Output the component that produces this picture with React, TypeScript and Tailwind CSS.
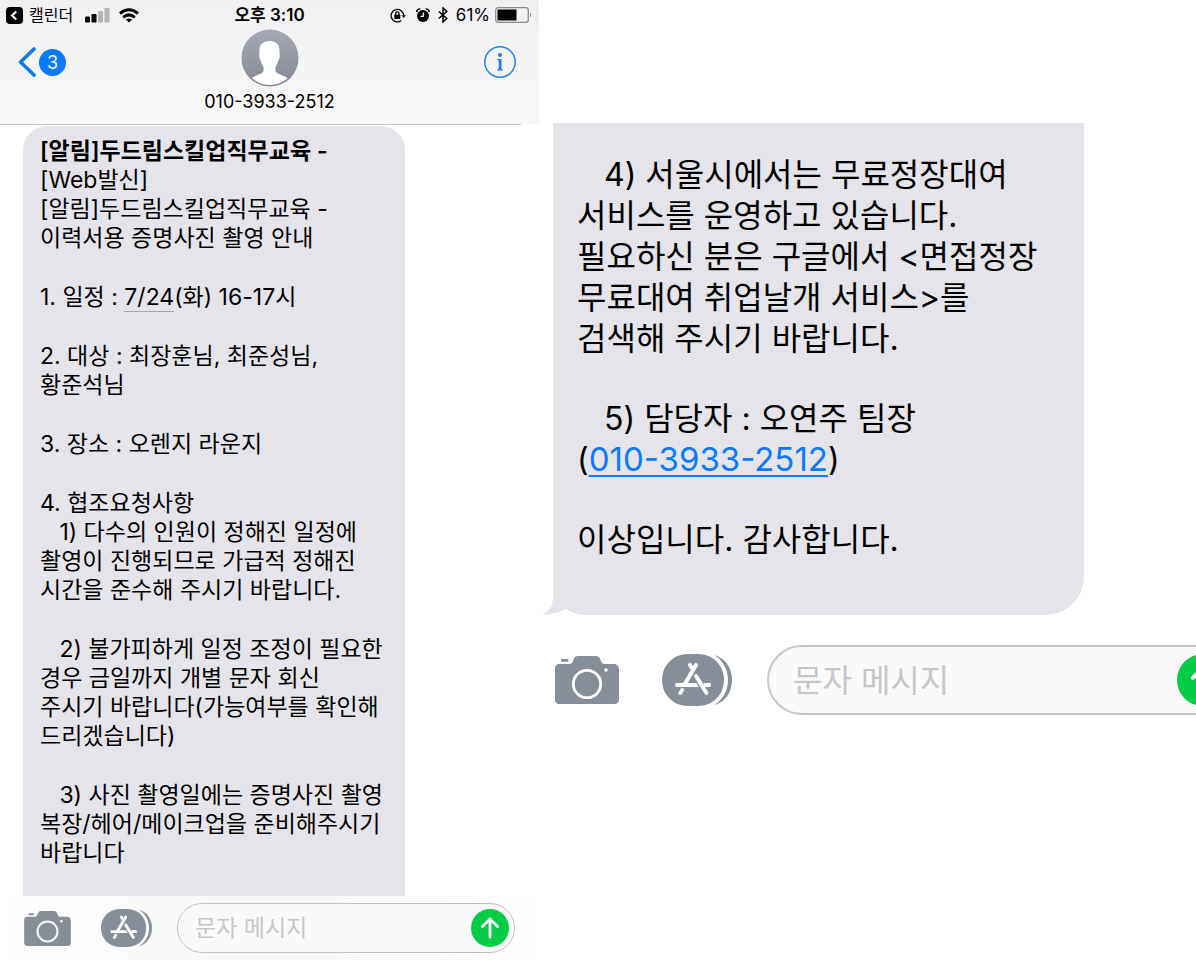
import React from "react";

const FONT = "font-['Inter','Noto_Sans_CJK_KR',sans-serif]";

function CameraIcon({ className, hole }: { className: string; hole: string }) {
  return (
    <svg viewBox="0 0 64 48" className={className} aria-hidden="true">
      <rect x="6" y="3" width="7.4" height="2.8" rx="0.6" fill="#868e99" />
      <path
        d="M5 8H14C16.500 8 17.500 6.500 18.500 4L19 2.800C19.800 1 21 0 23 0H41C43 0 44.200 1 45 2.800L45.500 4C46.500 6.500 47.500 8 50 8H58C62 8 64 10 64 13.500V43C64 46.500 62.500 48 59 48H5C1.500 48 0 46.500 0 43V13C0 9.500 1.500 8 5 8Z"
        fill="#868e99"
      />
      <circle cx="32" cy="28" r="13.7" fill="none" stroke={hole} strokeWidth="2.8" />
      <circle cx="51" cy="14" r="1.8" fill={hole} />
    </svg>
  );
}

function AppStoreIcon({ className }: { className: string }) {
  return (
    <svg viewBox="0 0 70 52" className={className} fill="none" aria-hidden="true">
      <path
        d="M26 0H36C51 0 62 11.500 62 26S51 52 36 52H26C11 52 0 40.500 0 26S11 0 26 0Z"
        fill="#868e99"
      />
      <path d="M52 1C64 4 70 15 70 26S64 48 52 51C61 46 66 36 66 26S61 6 52 1Z" fill="#868e99" />
      <g stroke="#fff" strokeWidth="4" strokeLinecap="round">
        <path d="M34 11L22.500 30.500M28 11L30.500 15M20.200 36L18.300 39M15 31H47" />
        <path d="M33 20.500L44.500 39.500" stroke="#868e99" strokeWidth="6.500" strokeLinecap="butt" />
        <path d="M34 22L44.500 39M43 31H47" />
      </g>
    </svg>
  );
}

function ArrowUp({ className }: { className: string }) {
  return (
    <svg viewBox="0 0 38 38" className={className} fill="none" stroke="#fff" strokeWidth="2.8" strokeLinecap="round" strokeLinejoin="round" aria-hidden="true">
      <path d="M19 28V10M11.500 17.500L19 10L26.500 17.500" />
    </svg>
  );
}

function StatusBar() {
  return (
    <div className="grid h-[29px] grid-cols-[1fr_auto_1fr] items-center px-[6px] pt-px text-[17px] leading-[28px] text-black">
      <div className="flex items-center">
        <svg viewBox="0 0 17 17" className="size-[17px]" aria-hidden="true">
          <rect width="17" height="17" rx="4" />
          <path d="M10.300 4.500L6 8.500L10.300 12.500" fill="none" stroke="#fff" strokeWidth="2" />
        </svg>
        <span className="ml-[6px] text-[16px]">캘린더</span>
        <svg viewBox="0 0 25 15" className="ml-3 h-[15px] w-[25px]" aria-hidden="true">
          <rect x="0" y="8.500" width="5" height="6" rx="1.200" />
          <rect x="6.500" y="6" width="5" height="8.500" rx="1.200" />
          <rect x="13" y="3" width="5" height="11.500" rx="1.200" fill="#b4b4b7" />
          <rect x="19.500" y="0" width="5" height="14.500" rx="1.200" fill="#b4b4b7" />
        </svg>
        <svg viewBox="0 0 20 15" className="ml-[9px] h-[15px] w-[20px]" fill="none" stroke="#000" strokeWidth="3" aria-hidden="true">
          <path d="M1 5.500Q10 -2 19 5.500M4.200 9.300Q10 4.500 15.800 9.300" />
          <path d="M10 14.600L6.800 11.500Q10 9.300 13.200 11.500Z" fill="#000" stroke="none" />
        </svg>
      </div>
      <time className="font-semibold">오후 3:10</time>
      <div className="flex items-center justify-end">
        <svg viewBox="0 0 16 15" className="h-[15px] w-[16px]" fill="none" stroke="#000" strokeWidth="1.300" aria-hidden="true">
          <path d="M11.300 12.600A6.300 6.300 0 1 1 13.700 7.500" />
          <path d="M11.500 7.200H16L13.700 10Z" fill="#000" stroke="none" />
          <rect x="4.300" y="6.800" width="6" height="4.200" rx="0.500" fill="#000" stroke="none" />
          <path d="M5.600 7V5.500A1.700 1.700 0 0 1 9 5.500V7" />
        </svg>
        <svg viewBox="0 0 14 15" className="ml-[10px] h-[15px] w-[14px]" aria-hidden="true">
          <circle cx="7" cy="8" r="6" />
          <path d="M0.800 4A3 3 0 0 1 4.300 1M13.200 4A3 3 0 0 0 9.700 1" fill="none" stroke="#000" strokeWidth="1.500" />
          <path d="M7.300 4.500V8.300H4.500" fill="none" stroke="#fff" strokeWidth="1.200" />
        </svg>
        <svg viewBox="0 0 10 16" className="ml-2 h-4 w-[10px]" fill="none" stroke="#000" strokeWidth="1.500" aria-hidden="true">
          <path d="M0.800 4.500L8.800 11.500L5 15V1L8.800 4.500L0.800 11.500" />
        </svg>
        <span className="ml-2">61%</span>
        <svg viewBox="0 0 38 16" className="ml-[5px] h-4 w-[38px]" aria-hidden="true">
          <rect x="0.700" y="0.700" width="32.600" height="14.600" rx="2.500" fill="none" stroke="#8b8b8e" strokeWidth="1.300" />
          <rect x="2.500" y="2.500" width="19" height="11" />
          <path d="M35 5.500Q37 8 35 10.500Z" fill="#77777a" />
        </svg>
      </div>
    </div>
  );
}

function Avatar() {
  return (
    <svg viewBox="0 0 58 58" className="size-[58px]" aria-hidden="true">
      <defs>
        <linearGradient id="avatar-bg" x1="0" y1="0" x2="0" y2="1">
          <stop offset="0" stopColor="#a4a9b5" />
          <stop offset="1" stopColor="#858994" />
        </linearGradient>
        <clipPath id="avatar-clip">
          <circle cx="29" cy="29" r="27" />
        </clipPath>
      </defs>
      <circle cx="29" cy="29" r="28.500" fill="url(#avatar-bg)" />
      <path
        clipPath="url(#avatar-clip)"
        d="M28.500 12C35 12 38.500 15.500 38.500 21.500V25C39.300 27 38.500 30 37.300 31.500C36.800 34.500 35.500 36.500 34.500 38V42C36 45.500 43 46 48 50V58H9V50C14 46 21 45.500 22.500 42V38C21.500 36.500 20.200 34.500 19.700 31.500C18.500 30 17.700 27 18.500 25V21.500C18.500 15.500 22 12 28.500 12Z"
        fill="#fff"
      />
    </svg>
  );
}

function LeftPhone() {
  return (
    <section className="flex min-h-screen min-w-0 flex-col">
      <header className="bg-linear-to-b from-[#f0f0f2] to-[#f8f8f9]">
        <StatusBar />
        <div className="grid h-[95px] grid-cols-[1fr_auto_1fr] px-[18px]">
          <a href="#inbox" aria-label="3" className="flex h-[66px] items-center gap-[2px] self-start text-[#0a7aff]">
            <svg viewBox="0 0 19 30" className="h-[30px] w-[19px]" fill="none" stroke="#1279ef" strokeWidth="3.600" strokeLinecap="round" strokeLinejoin="round" aria-hidden="true">
              <path d="M16 2L2.500 15L16 28" />
            </svg>
            <span className="flex size-[27px] items-center justify-center rounded-full bg-[#0a7aff] text-[18px] text-white">3</span>
          </a>
          <div className="flex flex-col items-center">
            <Avatar />
            <h1 className="text-[18px] leading-[29px] text-black">010-3933-2512</h1>
          </div>
          <button aria-label="정보" className="mr-[5px] flex h-[66px] items-center self-start justify-self-end">
            <svg viewBox="0 0 32 32" className="size-8" aria-hidden="true">
              <circle cx="16" cy="16" r="15.200" fill="none" stroke="#1f7fe8" strokeWidth="1.500" />
              <circle cx="16" cy="9" r="2" fill="#1f7fe8" />
              <path d="M13.200 13H17.500V23.200H19V24.500H13V23.200H14.700V14.300H13.200Z" fill="#1f7fe8" />
            </svg>
          </button>
        </div>
      </header>
      <div className="mr-[18px] h-px bg-[#c6c6c9]" />
      <main className="flex-1 pt-px pl-[23px]">
        <article className="flex h-full max-w-[382px] flex-col gap-[30px] rounded-t-[24px] bg-[#e5e4ea] pt-[11px] pr-4 pb-[27px] pl-[17px] text-[23px] leading-[29px] whitespace-pre text-black">
          <p>
            <b className="font-semibold">[알림]두드림스킬업직무교육 -</b>
            {"\n[Web발신]\n[알림]두드림스킬업직무교육 -\n이력서용 증명사진 촬영 안내"}
          </p>
          <p>
            1. 일정 : <span className="border-b border-[#a5a5aa]">7/24</span>(화) 16-17시
          </p>
          <p>{"2. 대상 : 최장훈님, 최준성님,\n황준석님"}</p>
          <p>3. 장소 : 오렌지 라운지</p>
          <p>{"4. 협조요청사항\n   1) 다수의 인원이 정해진 일정에\n촬영이 진행되므로 가급적 정해진\n시간을 준수해 주시기 바랍니다."}</p>
          <p>{"   2) 불가피하게 일정 조정이 필요한\n경우 금일까지 개별 문자 회신\n주시기 바랍니다(가능여부를 확인해\n드리겠습니다)"}</p>
          <p>{"   3) 사진 촬영일에는 증명사진 촬영\n복장/헤어/메이크업을 준비해주시기\n바랍니다"}</p>
        </article>
      </main>
      <form onSubmit={(e) => e.preventDefault()} className="flex h-16 items-center bg-linear-to-r from-white via-[#f5f5f7] to-white px-6">
        <button type="button" aria-label="카메라" className="shrink-0">
          <CameraIcon className="h-[35px] w-[47px]" hole="#f6f6f8" />
        </button>
        <button type="button" aria-label="앱" className="ml-[30px] shrink-0">
          <AppStoreIcon className="h-[38px] w-[51px]" />
        </button>
        <div className="ml-[25px] flex h-[50px] min-w-0 flex-1 items-center rounded-full border border-[#c2c0c5] bg-[#fafafa] pr-[5px] pl-[17px]">
          <input aria-label="문자 메시지" placeholder="문자 메시지" className="min-w-0 flex-1 bg-transparent text-[23px] leading-[29px] outline-none placeholder:text-[#c5c5ca]" />
          <button aria-label="보내기" className="size-[38px] shrink-0 rounded-full bg-[#05cc47]">
            <ArrowUp className="size-full" />
          </button>
        </div>
      </form>
    </section>
  );
}

function RightPhone() {
  return (
    <section className="min-w-0 overflow-hidden pt-[123px] pl-[14px]">
      <article className="relative flex max-w-[531px] flex-col gap-[39px] rounded-br-[38px] bg-[#e5e4ea] pt-[31px] pr-4 pb-[55px] pl-6 text-[32px] leading-[41px] whitespace-pre text-black">
        <svg viewBox="0 0 44 30" className="absolute bottom-0 -left-[11px] h-[30px] w-[44px]" aria-hidden="true">
          <path d="M11 30V28L24 22L44 30Z" fill="#fff" />
          <path d="M11 0V12C11 20 7 27 0 29.500C9 30 18 27.500 24 23.500C30 28 37 30 44 30V0Z" fill="#e5e4ea" />
        </svg>
        <p>{"   4) 서울시에서는 무료정장대여\n서비스를 운영하고 있습니다.\n필요하신 분은 구글에서 <면접정장\n무료대여 취업날개 서비스>를\n검색해 주시기 바랍니다."}</p>
        <p>
          <span className="block">{"   5) 담당자 : 오연주 팀장"}</span>
          <span className="block">
            (<a href="tel:010-3933-2512" className="text-[33px] text-[#0a7aff] underline decoration-2 underline-offset-4">010-3933-2512</a>)
          </span>
        </p>
        <p>이상입니다. 감사합니다.</p>
      </article>
      <form onSubmit={(e) => e.preventDefault()} className="mt-[30px] -mr-[41px] flex items-center pl-[2px]">
        <button type="button" aria-label="카메라" className="shrink-0">
          <CameraIcon className="h-12 w-16" hole="#fff" />
        </button>
        <button type="button" aria-label="앱" className="ml-[43px] shrink-0">
          <AppStoreIcon className="h-[52px] w-[70px]" />
        </button>
        <div className="ml-[35px] flex h-[70px] min-w-0 flex-1 items-center rounded-full border-2 border-[#c7c6cc] bg-[#fafafa] pr-[6px] pl-6">
          <input aria-label="문자 메시지" placeholder="문자 메시지" className="min-w-0 flex-1 bg-transparent text-[32px] leading-[41px] outline-none placeholder:text-[#c5c5ca]" />
          <button aria-label="보내기" className="size-[52px] shrink-0 rounded-full bg-[#05cc47]">
            <ArrowUp className="size-full" />
          </button>
        </div>
      </form>
    </section>
  );
}

export default function App() {
  return (
    <div lang="ko" className={`grid min-h-screen grid-cols-[539fr_657fr] bg-white ${FONT}`}>
      <LeftPhone />
      <RightPhone />
    </div>
  );
}
